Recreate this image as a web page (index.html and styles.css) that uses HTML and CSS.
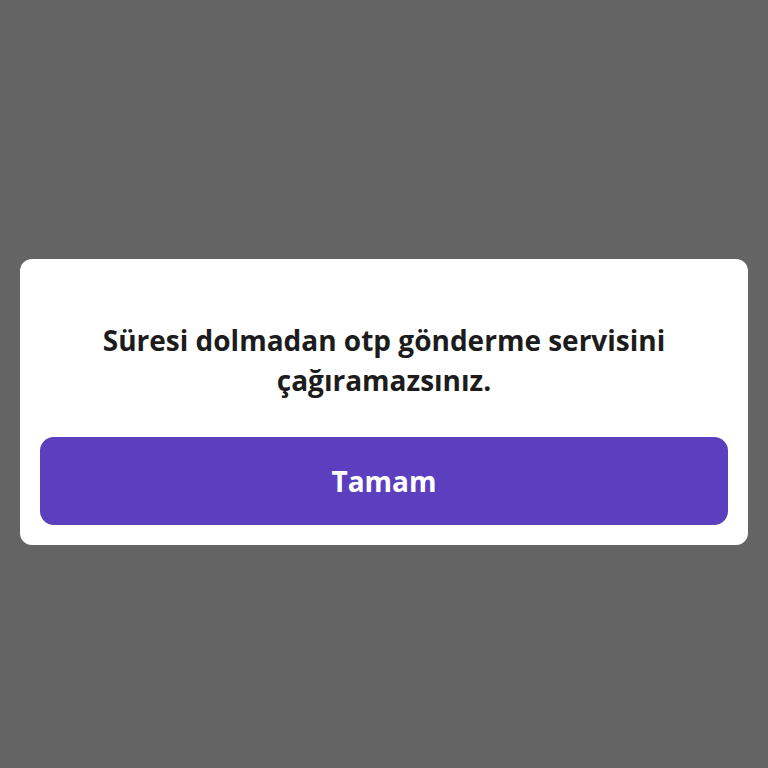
FILE: index.html
```html
<!DOCTYPE html>
<html lang="tr">
<head>
    <meta charset="UTF-8">
    <meta name="viewport" content="width=device-width, initial-scale=1.0">
    <title>Uyarı</title>
    <link rel="stylesheet" href="styles.css">
</head>
<body>

<div class="overlay">
    <div class="dialog">
        <p class="dialog-message">Süresi dolmadan otp gönderme servisini çağıramazsınız.</p>
        <button class="dialog-button">Tamam</button>
    </div>
</div>

</body>
</html>
```

FILE: styles.css
```css
body {
    margin: 0;
    padding: 0;
    background-color: #646464;
    font-family: "Open Sans", "Noto Sans", sans-serif;
}

.overlay {
    height: 768px;
    padding: 259px 20px 0;
    box-sizing: border-box;
}

.dialog {
    background-color: #fff;
    border-radius: 12px;
    padding: 61px 20px 20px;
}

.dialog-message {
    margin: 0 20px 37px;
    font-size: 28px;
    font-weight: 700;
    line-height: 40px;
    color: #1c1c1c;
    text-align: center;
}

.dialog-button {
    display: block;
    width: 100%;
    height: 88px;
    border: none;
    border-radius: 14px;
    background-color: #5b3fbe;
    color: #fff;
    font-family: inherit;
    font-size: 28px;
    font-weight: 700;
    cursor: pointer;
}
```
